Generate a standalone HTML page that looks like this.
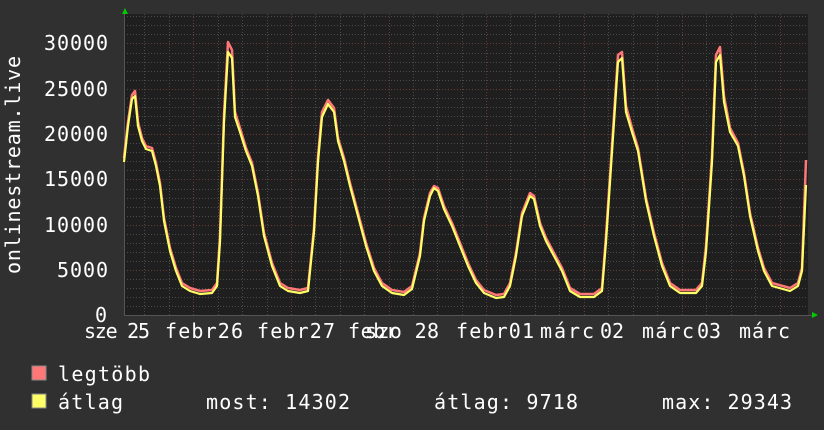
<!DOCTYPE html>
<html><head><style>
html,body{margin:0;padding:0;background:#303030;}
svg{display:block;font-family:"DejaVu Sans Mono","Liberation Mono",monospace;}
</style></head><body>
<svg width="824" height="430" viewBox="0 0 824 430" xmlns="http://www.w3.org/2000/svg">
<rect width="824" height="430" fill="#303030"/>
<rect x="124" y="14" width="684" height="301" fill="#1f1f1f"/>
<g stroke="#4a4a4a" stroke-width="1" stroke-dasharray="1,2">
<path d="M124 306.5H808M124 297.5H808M124 288.5H808M124 279.5H808M124 261.5H808M124 252.5H808M124 243.5H808M124 234.5H808M124 216.5H808M124 207.5H808M124 198.5H808M124 189.5H808M124 170.5H808M124 161.5H808M124 152.5H808M124 143.5H808M124 125.5H808M124 116.5H808M124 107.5H808M124 98.5H808M124 80.5H808M124 71.5H808M124 62.5H808M124 53.5H808M124 34.5H808M124 25.5H808M124 16.5H808"/>
<path d="M144.5 14V315M169.5 14V315M218.5 14V315M242.5 14V315M267.5 14V315M315.5 14V315M340.5 14V315M364.5 14V315M413.5 14V315M437.5 14V315M462.5 14V315M510.5 14V315M535.5 14V315M559.5 14V315M608.5 14V315M633.5 14V315M657.5 14V315M706.5 14V315M731.5 14V315M755.5 14V315"/>
</g>
<g stroke="#6a3a3a" stroke-width="1" stroke-dasharray="1,2">
<path d="M124 270.5H808M124 225.5H808M124 179.5H808M124 134.5H808M124 89.5H808M124 43.5H808"/>
<path d="M193.5 14V315M291.5 14V315M389.5 14V315M486.5 14V315M584.5 14V315M682.5 14V315M780.5 14V315"/>
</g>
<path d="M124 315.5H812M124.5 10V315" stroke="#555" stroke-width="1"/>
<path d="M122 14 L128 14 L125 8Z" fill="#00cc00"/>
<path d="M812 312 L812 318 L818 315Z" fill="#00cc00"/>
<polyline fill="none" stroke="#ff7777" stroke-width="2.5" stroke-linejoin="round" points="124,158 128,122 132,95 135,91 138,122 142,138 146,146 152,148 156,163 160,183 164,218 170,248 176,268 182,283 190,288 200,291 212,290 217,283 220,236 224,115 228,42 232,50 235,112 240,128 246,148 252,163 258,193 264,233 272,263 280,283 288,288 300,290 308,288 314,228 318,157 322,112 328,100 334,108 338,138 344,158 350,183 358,213 366,243 374,268 382,283 392,290 404,292 412,286 420,253 424,218 430,193 434,186 438,188 444,206 452,223 460,243 468,263 476,280 484,290 496,295 504,294 510,283 516,253 522,213 530,193 534,196 540,223 546,238 554,253 562,268 570,288 580,294 594,294 602,288 606,236 612,146 618,55 622,52 626,106 632,128 638,148 646,198 654,233 662,263 670,283 680,290 696,290 702,283 706,246 712,156 716,55 720,47 724,96 730,128 738,143 744,173 750,213 758,248 764,268 772,283 790,288 798,283 802,268 806,160"/>
<polyline fill="none" stroke="#ffff66" stroke-width="2.2" stroke-linejoin="round" points="124,162 128,126 132,99 135,96 138,126 142,141 146,149 152,151 156,166 160,186 164,221 170,251 176,271 182,286 190,291 200,294 212,293 217,286 220,242 224,122 228,52 232,58 235,117 240,132 246,151 252,166 258,196 264,236 272,266 280,286 288,291 300,293 308,291 314,232 318,162 322,117 328,104 334,112 338,141 344,161 350,186 358,216 366,246 374,271 382,286 392,293 404,295 412,289 420,256 424,221 430,196 434,188 438,191 444,209 452,226 460,246 468,266 476,283 484,293 496,298 504,297 510,286 516,256 522,216 530,196 534,199 540,226 546,241 554,256 562,271 570,291 580,297 594,297 602,291 606,242 612,152 618,62 622,58 626,112 632,132 638,151 646,201 654,236 662,266 670,286 680,293 696,293 702,286 706,252 712,162 716,62 720,55 724,102 730,132 738,146 744,176 750,216 758,251 764,271 772,286 790,291 798,286 802,271 806,185"/>
<g fill="#ffffff" font-size="20">
<text x="44" y="50" textLength="64">30000</text>
<text x="44" y="96" textLength="64">25000</text>
<text x="44" y="141" textLength="64">20000</text>
<text x="44" y="186" textLength="64">15000</text>
<text x="44" y="232" textLength="64">10000</text>
<text x="57" y="277" textLength="51">5000</text>
<text x="95" y="322" textLength="13">0</text>
</g>
<text x="0" y="0" fill="#ffffff" font-size="20" transform="translate(20 274) rotate(-90)" textLength="218">onlinestream.live</text>
<g fill="#ffffff" font-size="20">
<text x="84" y="338" textLength="66">sze 25</text>
<text x="165" y="338" textLength="78">febr26</text>
<text x="257" y="338" textLength="78">febr27</text>
<text x="348" y="338" textLength="50">febr</text>
<text x="365" y="338" textLength="74">szo 28</text>
<text x="456" y="338" textLength="78">febr01</text>
<text x="540" y="338" textLength="54">márc</text>
<text x="600" y="338">02</text>
<text x="642" y="338" textLength="52">márc</text>
<text x="697" y="338">03</text>
<text x="739" y="338" textLength="51">márc</text>
</g>
<rect x="32" y="366" width="14" height="14" fill="#ff7777" stroke="#888" stroke-width="1"/>
<rect x="32" y="394" width="14" height="14" fill="#ffff66" stroke="#888" stroke-width="1"/>
<g fill="#ffffff" font-size="20">
<text x="58" y="381" textLength="92">legtöbb</text>
<text x="58" y="409" textLength="65">átlag</text>
<text x="206" y="409" textLength="144">most: 14302</text>
<text x="434" y="409" textLength="144">átlag: 9718</text>
<text x="662" y="409" textLength="130">max: 29343</text>
</g>
</svg>
</body></html>
